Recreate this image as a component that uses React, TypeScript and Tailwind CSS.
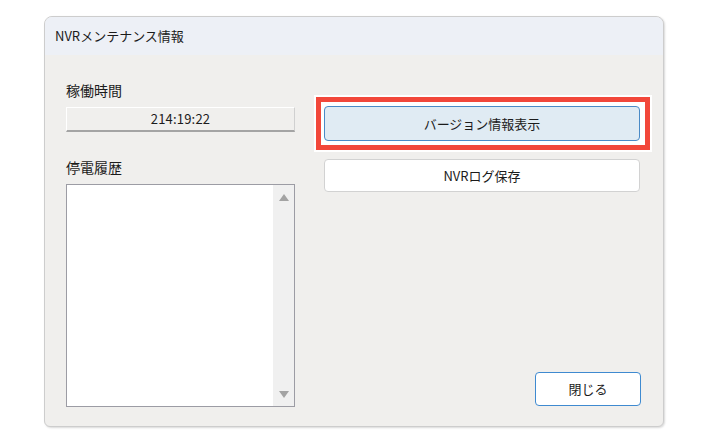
import React from "react";

const jp = "font-['Noto_Sans_CJK_JP','Noto_Sans',sans-serif]";

function ScrollArrow({ up }: { up?: boolean }) {
  return (
    <svg width="10" height="7" viewBox="0 0 10 7" className="fill-[#a3a3a3]">
      {up ? <path d="M5 0 L10 7 L0 7 Z" /> : <path d="M0 0 L10 0 L5 7 Z" />}
    </svg>
  );
}

export default function App() {
  return (
    <div className={`w-[708px] h-[443px] bg-white overflow-hidden pt-[16px] pl-[44px] text-[#1b1b1b] ${jp}`}>
      <div className="w-[620px] h-[411px] flex flex-col rounded-t-[8px] rounded-b-[6px] border border-[#cdcdcd] shadow-[1px_1px_2px_rgba(0,0,0,0.15)] overflow-hidden bg-[#f0efed]">
        {/* title bar */}
        <div className="h-[38px] shrink-0 bg-[#edf0f6] flex items-center pl-[10px] text-[13px]">
          NVRメンテナンス情報
        </div>

        {/* body */}
        <div className="flex-1 flex pl-[21px]">
          <div className="w-[229px] flex flex-col pt-[25px]">
            <div className="text-[14px] leading-[20px]">稼働時間</div>
            <div className="mt-[7px] h-[25px] flex items-center justify-center border-t border-l border-white border-r border-r-[#d0d0d0] border-b-2 border-b-[#a4a4a4] text-[13px] tracking-[0.2px]">
              214:19:22
            </div>
            <div className="mt-[25px] text-[14px] leading-[20px]">停電履歴</div>
            <div className="mt-[7px] h-[223px] flex border border-[#9c9ca4] bg-white">
              <div className="flex-1" />
              <div className="w-[21px] bg-[#f0f0f0] flex flex-col items-center justify-between pt-[9px] pb-[8px]">
                <ScrollArrow up />
                <ScrollArrow />
              </div>
            </div>
          </div>

          <div className="ml-[29px] w-[316px] flex flex-col pt-[51px] pb-[20px]">
            <div className="relative">
              <span className="absolute -left-[8px] -top-[9px] -right-[10px] -bottom-[9px] bg-white border-[5px] border-[#f2473a] shadow-[0_0_0_2px_white]" />
              <button className="relative w-full h-[35px] rounded-[4px] border-[1.5px] border-[#4a8ac6] bg-[#e0ebf3] text-[13px]">
                バージョン情報表示
              </button>
            </div>
            <button className="mt-[18px] w-full h-[33px] rounded-[4px] border border-[#d2d2d2] bg-white text-[13px]">
              NVRログ保存
            </button>
            <div className="mt-auto flex justify-end">
              <button className="w-[106px] h-[34px] rounded-[4px] border-[1.5px] border-[#3f8ad0] bg-white text-[13px] -mr-[1px]">
                閉じる
              </button>
            </div>
          </div>
        </div>
      </div>
    </div>
  );
}
